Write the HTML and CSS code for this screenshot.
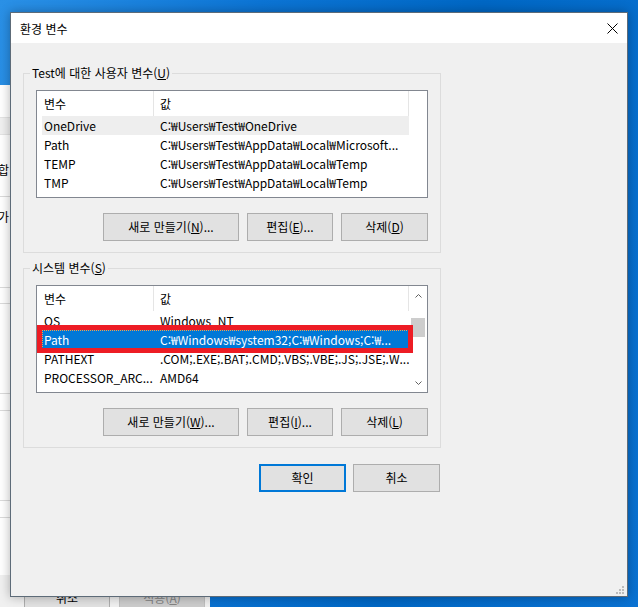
FILE: index.html
```html
<!DOCTYPE html>
<html lang="ko">
<head>
<meta charset="utf-8">
<title>환경 변수</title>
<link rel="stylesheet" href="styles.css">
</head>
<body>
<div class="desktop">
  <div class="bgwin-left">
    <div class="bw-blank h32"></div>
    <div class="bw-tabs"></div>
    <div class="bw-text h61"><span class="bw-char t1">합</span></div>
    <div class="bw-line"></div>
    <div class="bw-text h90"><span class="bw-char t2">가</span></div>
    <div class="bw-line"></div>
    <div class="bw-blank h15"></div>
    <div class="bw-line"></div>
    <div class="bw-blank h89"></div>
    <div class="bw-line"></div>
    <div class="bw-blank h16"></div>
    <div class="bw-line"></div>
    <div class="bw-blank h89"></div>
    <div class="bw-line"></div>
    <div class="bw-blank h16"></div>
    <div class="bw-line"></div>
    <div class="bw-blank h57"></div>
    <div class="bw-foot"></div>
  </div>
  <div class="bgwin-bottom">
    <span class="bgbtn">취소</span>
    <span class="bgbtn off">적용(<u>A</u>)</span>
  </div>

  <div class="dialog">
    <div class="titlebar">
      <span class="title">환경 변수</span>
      <svg class="close" width="11" height="11" viewBox="0 0 11 11"><path d="M0.5 0.5 L10.5 10.5 M10.5 0.5 L0.5 10.5" stroke="#000" stroke-width="1" fill="none"/></svg>
    </div>
    <div class="dialog-body">
      <section class="group">
        <div class="group-title">Test에 대한 사용자 변수(<u>U</u>)</div>
        <div class="list">
          <div class="list-main">
            <div class="list-head"><div class="hcol c1">변수</div><div class="hcol c2">값</div></div>
            <div class="row hot"><div class="cell c1">OneDrive</div><div class="cell c2">C:₩Users₩Test₩OneDrive</div></div>
            <div class="row"><div class="cell c1">Path</div><div class="cell c2">C:₩Users₩Test₩AppData₩Local₩Microsoft...</div></div>
            <div class="row"><div class="cell c1">TEMP</div><div class="cell c2">C:₩Users₩Test₩AppData₩Local₩Temp</div></div>
            <div class="row"><div class="cell c1">TMP</div><div class="cell c2">C:₩Users₩Test₩AppData₩Local₩Temp</div></div>
          </div>
        </div>
        <div class="btn-row">
          <button class="btn w136">새로 만들기(<u>N</u>)...</button>
          <button class="btn w86">편집(<u>E</u>)...</button>
          <button class="btn w87">삭제(<u>D</u>)</button>
        </div>
      </section>

      <section class="group g2">
        <div class="group-title">시스템 변수(<u>S</u>)</div>
        <div class="list">
          <div class="list-main">
            <div class="list-head"><div class="hcol c1">변수</div><div class="hcol c2">값</div></div>
            <div class="row"><div class="cell c1">OS</div><div class="cell c2">Windows_NT</div></div>
            <div class="row sel"><div class="cell c1">Path</div><div class="cell c2">C:₩Windows₩system32;C:₩Windows;C:₩...</div></div>
            <div class="row"><div class="cell c1">PATHEXT</div><div class="cell c2">.COM;.EXE;.BAT;.CMD;.VBS;.VBE;.JS;.JSE;.W...</div></div>
            <div class="row"><div class="cell c1">PROCESSOR_ARC...</div><div class="cell c2">AMD64</div></div>
          </div>
          <div class="scrollbar">
            <div class="sb-arrow up"><svg width="7" height="4" viewBox="0 0 7 4"><path d="M0.5 3.5 L3.5 0.5 L6.5 3.5" stroke="#606060" fill="none"/></svg></div>
            <div class="sb-thumb"></div>
            <div class="sb-space"></div>
            <div class="sb-arrow down"><svg width="7" height="4" viewBox="0 0 7 4"><path d="M0.5 0.5 L3.5 3.5 L6.5 0.5" stroke="#606060" fill="none"/></svg></div>
          </div>
          <div class="annot"></div>
        </div>
        <div class="btn-row">
          <button class="btn w136">새로 만들기(<u>W</u>)...</button>
          <button class="btn w86">편집(<u>I</u>)...</button>
          <button class="btn w87">삭제(<u>L</u>)</button>
        </div>
      </section>

      <div class="footer">
        <button class="btn w87 default">확인</button>
        <button class="btn w87">취소</button>
      </div>
    </div>
    <svg class="grip" width="8" height="8" viewBox="0 0 8 8">
      <rect x="6" y="0" width="2" height="2" fill="#bcbcbc"/>
      <rect x="3" y="3" width="2" height="2" fill="#bcbcbc"/>
      <rect x="6" y="3" width="2" height="2" fill="#bcbcbc"/>
      <rect x="0" y="6" width="2" height="2" fill="#bcbcbc"/>
      <rect x="3" y="6" width="2" height="2" fill="#bcbcbc"/>
      <rect x="6" y="6" width="2" height="2" fill="#bcbcbc"/>
    </svg>
  </div>
</div>
</body>
</html>
```

FILE: styles.css
```css
* { box-sizing: border-box; }
html, body { margin: 0; padding: 0; }
body {
  width: 638px;
  height: 607px;
  overflow: hidden;
  font-family: "Noto Sans CJK KR", "Noto Sans", sans-serif;
  font-size: 12px;
  color: #000;
}
u { text-underline-offset: 1px; }

.desktop {
  position: relative;
  width: 638px;
  height: 607px;
  overflow: hidden;
  background: linear-gradient(100deg, #2a90e6 0%, #0c74d4 35%, #0067c4 65%, #0a72d2 100%);
}

/* window behind, on the left */
.bgwin-left {
  position: absolute;
  left: 0;
  top: 85px;
  width: 40px;
  height: 530px;
  background: #fff;
  display: flex;
  flex-direction: column;
}
.bw-blank { flex-shrink: 0; }
.h32 { height: 32px; }
.h15 { height: 15px; }
.h16 { height: 16px; }
.h57 { height: 57px; }
.h61 { height: 61px; }
.h89 { height: 89px; }
.h90 { height: 90px; }
.bw-tabs {
  height: 18px;
  flex-shrink: 0;
  background: #f0f0f0;
  border-top: 1px solid #e3e3e3;
  border-bottom: 1px solid #e3e3e3;
}
.bw-text { flex-shrink: 0; }
.bw-char { display: block; margin-left: -2px; line-height: 16px; font-size: 12px; }
.t1 { padding-top: 27px; }
.t2 { padding-top: 12px; }
.bw-line { height: 1px; background: #dadada; flex-shrink: 0; }
.bw-foot { flex: 1; background: #f0f0f0; }

/* window behind, at the bottom */
.bgwin-bottom {
  position: absolute;
  left: 0;
  top: 575px;
  width: 210px;
  height: 40px;
  background: #f0f0f0;
  display: flex;
  gap: 9px;
  padding: 11px 0 0 24px;
}
.bgbtn {
  width: 86px;
  height: 23px;
  border: 1px solid #adadad;
  background: #e1e1e1;
  text-align: center;
  line-height: 21px;
}
.bgbtn.off { background: #cccccc; border-color: #bfbfbf; color: #838383; }

/* dialog */
.dialog {
  position: absolute;
  left: 10px;
  top: 12px;
  width: 618px;
  height: 585px;
  border: 1px solid #5d6b78;
  background: #f0f0f0;
  box-shadow: 0 0 10px rgba(0, 0, 0, 0.3);
  display: flex;
  flex-direction: column;
  z-index: 2;
}
.titlebar {
  height: 30px;
  flex-shrink: 0;
  background: #fff;
  display: flex;
  align-items: center;
  justify-content: space-between;
  padding: 0 9px 0 9px;
}
.title { line-height: 16px; padding-top: 1px; }
.close { display: block; }

.dialog-body {
  flex: 1;
  padding: 30px 0 0 12px;
  display: flex;
  flex-direction: column;
  align-items: flex-start;
}

.group {
  width: 418px;
  border: 1px solid #dcdcdc;
  padding: 0 12px 11px 12px;
  display: flex;
  flex-direction: column;
}
.group.g2 { margin-top: 15px; }
.group-title {
  align-self: flex-start;
  margin: -9px 0 0 -6px;
  padding: 0 2px;
  background: #f0f0f0;
  line-height: 16px;
}

.list {
  margin-top: 9px;
  height: 108px;
  border: 1px solid #828790;
  background: #fff;
  display: flex;
  position: relative;
  overflow: hidden;
}
.list-main {
  flex: 1;
  min-width: 0;
  display: flex;
  flex-direction: column;
}
.list-head { height: 25px; display: flex; flex-shrink: 0; }
.hcol { line-height: 25px; border-right: 1px solid #e5e5e5; white-space: nowrap; }
.hcol.c1 { width: 117px; padding-left: 7px; }
.hcol.c2 { width: 255px; padding-left: 6px; }

.row {
  height: 19px;
  flex-shrink: 0;
  margin-left: 5px;
  width: 367px;
  display: flex;
  line-height: 19px;
  white-space: nowrap;
}
.cell { overflow: hidden; }
.row .c1 { width: 111px; flex-shrink: 0; padding-left: 2px; }
.row .c2 { flex: 1; padding-left: 7px; }
.row.hot { background: #eeeeee; }
.row.sel {
  background: #0078d7;
  color: #fff;
  outline: 1px dotted #f5a04a;
  outline-offset: -1px;
}

.scrollbar {
  width: 18px;
  flex-shrink: 0;
  display: flex;
  flex-direction: column;
  align-items: center;
  background: #fff;
}
.sb-arrow { width: 18px; display: flex; align-items: center; justify-content: center; flex-shrink: 0; }
.sb-arrow.up { height: 20px; }
.sb-arrow.down { height: 18px; }
.sb-arrow svg { display: block; }
.sb-thumb { width: 14px; height: 19px; margin-top: 12px; background: #cdcdcd; flex-shrink: 0; }
.sb-space { flex: 1; }

.annot {
  position: absolute;
  left: 0;
  top: 39px;
  width: 376px;
  height: 28px;
  border: 5px solid #ed1c24;
}

.btn-row {
  display: flex;
  justify-content: flex-end;
  gap: 8px;
  margin-top: 15px;
}
.btn {
  height: 28px;
  border: 1px solid #adadad;
  background: #e1e1e1;
  font: inherit;
  color: #000;
  line-height: 26px;
  text-align: center;
  padding: 0;
  margin: 0;
}
.w136 { width: 136px; }
.w86 { width: 86px; }
.w87 { width: 87px; }
.btn.default { border: 2px solid #0078d7; line-height: 24px; }

.footer {
  width: 418px;
  margin-top: 16px;
  display: flex;
  justify-content: flex-end;
  gap: 7px;
  padding-right: 1px;
}

.grip {
  position: absolute;
  right: 3px;
  bottom: 2px;
}
```
